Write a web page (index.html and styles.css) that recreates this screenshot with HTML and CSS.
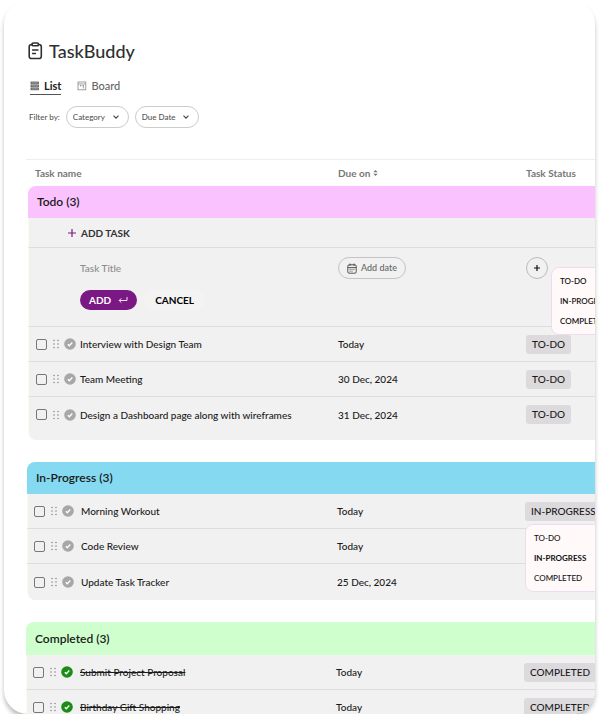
FILE: index.html
```
<!DOCTYPE html>
<html lang="en">
<head>
<meta charset="utf-8">
<title>TaskBuddy</title>
<link rel="stylesheet" href="styles.css">
</head>
<body>
<svg class="sprite" aria-hidden="true">
  <symbol id="grip" viewBox="0 0 8 10"><g fill="#8c8c8c"><circle cx="2" cy="1.500" r=".8"/><circle cx="6" cy="1.500" r=".8"/><circle cx="2" cy="5" r=".8"/><circle cx="6" cy="5" r=".8"/><circle cx="2" cy="8.500" r=".8"/><circle cx="6" cy="8.500" r=".8"/></g></symbol>
  <symbol id="check" viewBox="0 0 12 12"><circle cx="6" cy="6" r="5.800" fill="currentColor"/><path d="M3.800 6.200l1.500 1.500 3-3.200" fill="none" stroke="#fff" stroke-width="1.300"/></symbol>
  <symbol id="chevron" viewBox="0 0 8 8"><path d="M1.500 2.700L4 5.200l2.500-2.500" fill="none" stroke="#444" stroke-width="1.100"/></symbol>
</svg>
<main class="card">
  <header class="brand">
    <svg width="15" height="18" viewBox="0 0 15 18" fill="none" stroke="#2f2f2f" stroke-width="1.600" stroke-linecap="round"><path d="M4 2.500H3.500A2.300 2.300 0 0 0 1.200 4.800v9.400a2.300 2.300 0 0 0 2.300 2.300h7.500a2.300 2.300 0 0 0 2.300-2.300V4.800A2.300 2.300 0 0 0 11 2.500h-.5"/><rect x="4" y="1" width="6.500" height="2.800" rx="1.400"/><path d="M4.500 8h5.500M4.500 11.500h3" stroke-width="1.300"/></svg>
    <h1>TaskBuddy</h1>
  </header>
  <nav class="tabs">
    <a class="tab active" href="#list"><svg width="10" height="10" viewBox="0 0 10 10" fill="#aaa" stroke="#555" stroke-width=".8"><rect x="1" y="1" width="7.500" height="1.800"/><rect x="1" y="4" width="7.500" height="1.800"/><rect x="1" y="7" width="7.500" height="1.800"/></svg>List</a>
    <a class="tab" href="#board"><svg width="10" height="10" viewBox="0 0 10 10" fill="none" stroke="#888" stroke-width=".8"><rect x="1" y="1" width="7.800" height="7.800"/><path d="M1 3h7.800M3 4.500h1.400M5.600 4.500H7M3.700 4.500v1M6.300 4.500v3"/></svg>Board</a>
  </nav>
  <div class="filters">
    <span>Filter by:</span>
    <span class="pill"><select aria-label="Category"><option>Category</option></select><svg width="8" height="8"><use href="#chevron"/></svg></span>
    <span class="pill"><select aria-label="Due Date"><option>Due Date</option></select><svg width="8" height="8"><use href="#chevron"/></svg></span>
  </div>
  <div class="board">
    <table class="group todo">
      <colgroup><col class="c-name"><col class="c-due"><col></colgroup>
      <thead>
        <tr class="heads"><th>Task name</th><th>Due on <svg width="5" height="8" viewBox="0 0 5 8" fill="#777"><path d="M.3 3.200L2.500 1l2.200 2.200zM.3 4.800L2.500 7l2.200-2.200z"/></svg></th><th>Task Status</th></tr>
        <tr class="title"><th colspan="3">Todo (3)</th></tr>
      </thead>
      <tbody>
        <tr class="add-row"><td colspan="3"><button class="add-task" type="button"><svg width="10" height="10" viewBox="0 0 10 10" stroke="#7b1984" stroke-width="1.200"><path d="M5 1v8M1 5h8"/></svg>ADD TASK</button></td></tr>
        <tr class="form-row">
          <td><div class="form"><input class="title-input" type="text" placeholder="Task Title" aria-label="Task Title"><div class="actions"><button class="add" type="button">ADD <svg width="10" height="8" viewBox="0 0 10 8" fill="none" stroke="#fff" stroke-width=".9"><path d="M9 1v3.500H1.200M3.400 2.300L1.200 4.500l2.200 2.200"/></svg></button><button class="cancel" type="button">CANCEL</button></div></div></td>
          <td><button class="date" type="button"><svg width="10" height="11" viewBox="0 0 10 11" fill="none" stroke="#444" stroke-width=".9"><rect x=".8" y="1.800" width="8.400" height="8.400" rx="1.300"/><path d="M.8 4.600h8.400M3 .5v2.400M7 .5v2.400M2.600 6.400h1M4.500 6.400h1M6.400 6.400h1M2.600 8.200h1M4.500 8.200h1"/></svg>Add date</button></td>
          <td><button class="plus" type="button" aria-label="Add status"><svg width="8" height="8" viewBox="0 0 8 8" stroke="#111" stroke-width="1.200"><path d="M4 1v6M1 4h6"/></svg></button>
            <ul class="menu menu-new"><li>TO-DO</li><li>IN-PROGRESS</li><li>COMPLETED</li></ul></td>
        </tr>
        <tr><td><label class="task"><input type="checkbox"><svg class="grip"><use href="#grip"/></svg><svg class="check"><use href="#check"/></svg>Interview with Design Team</label></td><td>Today</td><td><span class="tag">TO-DO</span></td></tr>
        <tr><td><label class="task"><input type="checkbox"><svg class="grip"><use href="#grip"/></svg><svg class="check"><use href="#check"/></svg>Team Meeting</label></td><td>30 Dec, 2024</td><td><span class="tag">TO-DO</span></td></tr>
        <tr class="last"><td><label class="task"><input type="checkbox"><svg class="grip"><use href="#grip"/></svg><svg class="check"><use href="#check"/></svg>Design a Dashboard page along with wireframes</label></td><td>31 Dec, 2024</td><td><span class="tag">TO-DO</span></td></tr>
      </tbody>
    </table>
    <table class="group progress">
      <colgroup><col class="c-name"><col class="c-due"><col></colgroup>
      <thead><tr class="title"><th colspan="3">In-Progress (3)</th></tr></thead>
      <tbody>
        <tr><td><label class="task"><input type="checkbox"><svg class="grip"><use href="#grip"/></svg><svg class="check"><use href="#check"/></svg>Morning Workout</label></td><td>Today</td><td><span class="tag">IN-PROGRESS</span>
          <ul class="menu menu-edit"><li>TO-DO</li><li class="current">IN-PROGRESS</li><li>COMPLETED</li></ul></td></tr>
        <tr><td><label class="task"><input type="checkbox"><svg class="grip"><use href="#grip"/></svg><svg class="check"><use href="#check"/></svg>Code Review</label></td><td>Today</td><td></td></tr>
        <tr class="last"><td><label class="task"><input type="checkbox"><svg class="grip"><use href="#grip"/></svg><svg class="check"><use href="#check"/></svg>Update Task Tracker</label></td><td>25 Dec, 2024</td><td></td></tr>
      </tbody>
    </table>
    <table class="group done">
      <colgroup><col class="c-name"><col class="c-due"><col></colgroup>
      <thead><tr class="title"><th colspan="3">Completed (3)</th></tr></thead>
      <tbody>
        <tr><td><label class="task"><input type="checkbox"><svg class="grip"><use href="#grip"/></svg><svg class="check"><use href="#check"/></svg><s>Submit Project Proposal</s></label></td><td>Today</td><td><span class="tag">COMPLETED</span></td></tr>
        <tr><td><label class="task"><input type="checkbox"><svg class="grip"><use href="#grip"/></svg><svg class="check"><use href="#check"/></svg><s>Birthday Gift Shopping</s></label></td><td>Today</td><td><span class="tag">COMPLETED</span></td></tr>
      </tbody>
    </table>
  </div>
</main>
</body>
</html>
```
FILE: styles.css
```
* { box-sizing: border-box; }
body {
  margin: 0;
  background: #fff;
  color: #1a1a1a;
  font: 500 10px/14px Lato, "Open Sans", sans-serif;
}
svg { flex: none; }
button, input, select { font: inherit; color: inherit; }
button { display: inline-flex; align-items: center; border: 0; padding: 0; background: none; white-space: nowrap; }
.sprite { position: absolute; width: 0; height: 0; }

.card {
  height: calc(100vh - 8px);
  margin: 0 4px;
  padding: 40px 0 0 22px;
  border-radius: 24px;
  background: #fff;
  box-shadow: 0 4px 4px rgba(0, 0, 0, .25);
  overflow: hidden;
}

.brand { display: flex; align-items: center; gap: 6px; height: 22px; padding-left: 2px; color: #2f2f2f; }
.brand h1 { margin: 0; font-size: 18px; line-height: 22px; font-weight: 500; }

.tabs { display: flex; gap: 16px; margin-top: 16px; padding-left: 4px; font-size: 11px; line-height: 16px; }
.tab { display: flex; align-items: center; gap: 4px; color: #666; text-decoration: none; border-bottom: 1px solid transparent; }
.tab.active { color: #222; font-weight: 700; border-bottom-color: #555; }

.filters { display: flex; align-items: center; gap: 6px; margin-top: 11px; padding-left: 3px; font-size: 8px; color: #555; }
.pill { position: relative; display: flex; align-items: center; height: 22px; border: 1px solid #ccc; border-radius: 11px; }
.pill select { appearance: none; height: 20px; border: 0; margin: 0; padding: 0 22px 0 6px; background: transparent; }
.pill svg { position: absolute; right: 8px; pointer-events: none; }

.board { margin-top: 31px; border-top: 1px solid #eee; }
.group { width: 100%; table-layout: fixed; border-collapse: separate; border-spacing: 0; margin-bottom: 22px; white-space: nowrap; }
.c-name { width: 310px; }
.c-due { width: 188px; }
th { padding: 0; text-align: left; font-weight: 700; }
td { position: relative; height: 35px; padding: 0; background: #f1f1f1; border-bottom: 1px solid #ddd; }
td:first-child { border-left: 1px solid #fcfbe6; }

.heads th { height: 26px; color: #777; }
.heads th:first-child { padding-left: 7px; }
.title th { height: 32px; padding-left: 9px; font-size: 12px; font-weight: 600; border-radius: 8px 0 0 0; }
.last td { height: 36px; border-bottom: 0; }
.last td:first-child { border-bottom-left-radius: 8px; }

.todo { width: calc(100% - 2px); margin-left: 2px; }
.todo .title th { background: #fac3ff; }
.todo .last td { height: 43px; padding-bottom: 8px; }
.progress { width: calc(100% - 1px); margin-left: 1px; }
.progress .title th { background: #85d9f1; }
.done .title th { height: 33px; background: #ceffcc; }

.add-row td { height: 30px; padding-top: 2px; padding-left: 38px; }
.add-task { gap: 4px; color: #333; font-weight: 700; }

.form-row td { height: 79px; padding-top: 9px; vertical-align: top; }
.form { display: grid; gap: 11px; padding-left: 51px; }
.title-input { height: 22px; width: 100%; border: 0; padding: 0; background: transparent; outline: 0; }
.title-input::placeholder { color: #8c8c8c; opacity: 1; }
.actions { display: flex; gap: 7px; font-weight: 700; }
.actions button { height: 20px; border-radius: 10px; }
.add { gap: 7px; padding: 0 9px; background: #7b1984; color: #fff; }
.cancel { padding: 0 11px; background: #f3f3f3; color: #000; }
.date { height: 22px; gap: 4px; padding: 0 8px; border: 1px solid #c4c4c4; border-radius: 11px; font-size: 9px; color: #666; }
.plus { justify-content: center; width: 22px; height: 22px; border: 1px solid #bbb; border-radius: 50%; }

.task { display: flex; align-items: center; padding-left: 7px; }
.task input { appearance: none; flex: none; width: 11px; height: 11px; margin: 0 5px 0 0; border: 1px solid #777; border-radius: 2px; background: transparent; }
.grip { width: 8px; height: 10px; margin-right: 4px; }
.check { width: 12px; height: 12px; margin-right: 4px; color: #a7a7a7; }
.progress .task, .done .task { padding-left: 6px; }
.progress .check, .done .check { margin-right: 7px; }
.done .check { color: #1b8d17; }

.tag { display: inline-block; padding: 0 6px; border-radius: 3px; background: #dddadd; line-height: 19px; }

.menu { position: absolute; z-index: 1; width: 88px; margin: 0; padding: 3px 8px; list-style: none; font-size: 8px; font-weight: 600; line-height: 20px; color: #111; background: #fff9f9; border: 1px solid #eddcee; border-radius: 8px; }
.menu-new { top: 19px; left: 25px; }
.menu-edit { top: 30px; left: 0; font-weight: 500; }
.menu .current { font-weight: 700; }
```
